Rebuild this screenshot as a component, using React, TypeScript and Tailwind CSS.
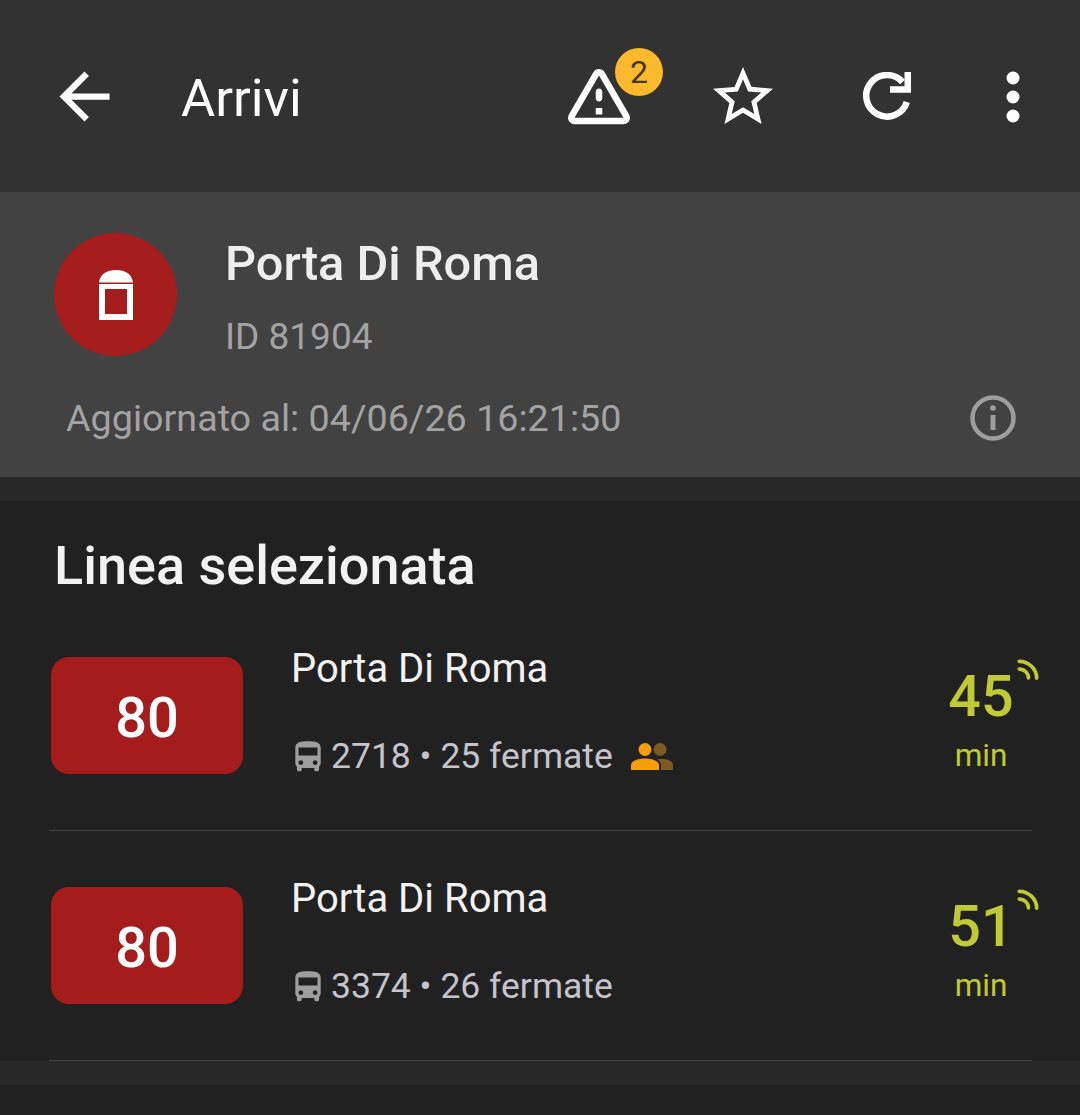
const BusIcon = () => (
  <svg viewBox="0 0 24 24" className="-ml-[2px] h-[38px] w-[38px] shrink-0 fill-[#9e9e9e]">
    <path d="M4 16c0 .88.39 1.67 1 2.22V20c0 .55.45 1 1 1h1c.55 0 1-.45 1-1v-1h8v1c0 .55.45 1 1 1h1c.55 0 1-.45 1-1v-1.78c.61-.55 1-1.34 1-2.22V6c0-3.5-3.58-4-8-4s-8 .5-8 4v10zm3.5 1c-.83 0-1.5-.67-1.5-1.5S6.67 14 7.5 14s1.5.67 1.5 1.5S8.33 17 7.5 17zm9 0c-.83 0-1.5-.67-1.5-1.5s.67-1.5 1.5-1.5 1.5.67 1.5 1.5-.67 1.5-1.5 1.5zm1.5-6H6V6h12v5z" />
  </svg>
);

const CrowdIcon = () => (
  <svg viewBox="0 0 44 30" className="ml-[17px] h-[30px] w-[44px] shrink-0">
    <circle cx="30" cy="7.5" r="6.5" fill="#7d5a22" />
    <path d="M27 17.5c7-1.5 16 .5 16 5.5v5H31v-5c0-2.3-1.5-4.3-4-5.5z" fill="#7d5a22" />
    <circle cx="15" cy="7.5" r="6.5" fill="#f59e0b" />
    <path d="M1 28v-5c0-4 7-6.5 14-6.5s14 2.5 14 6.5v5H1z" fill="#f59e0b" />
  </svg>
);

const RealtimeIcon = () => (
  <svg viewBox="0 0 24 24" fill="none" className="absolute right-[-25px] top-[-3px] h-[22px] w-[22px] stroke-[#c0ca33]" strokeWidth="4" strokeLinecap="round">
    <path d="M2.5 2.5C13 2.5 21.5 11 21.5 21" />
    <path d="M2.5 11C8 11 12.5 15.5 12.5 20.5" />
  </svg>
);

const ArrivalRow = ({ vehicle, stops, minutes, crowded }: { vehicle: string; stops: number; minutes: number; crowded?: boolean }) => (
  <div className="relative flex h-[230px] items-start pl-[51px]">
    <div className="mt-[56px] flex h-[117px] w-[192px] items-center justify-center rounded-[18px] bg-[#a51c1c] pt-[5px] text-[56px] font-medium text-white">
      80
    </div>
    <div className="ml-[48px] flex-1">
      <div className="mt-[43px] text-[40px] leading-[50px] text-[#f2f2f2]">Porta Di Roma</div>
      <div className="mt-[38px] flex h-[50px] items-center text-[35.5px] text-[#c5c3cc]">
        <BusIcon />
        <span className="ml-[4px] whitespace-nowrap">{vehicle} • {stops} fermate</span>
        {crowded && <CrowdIcon />}
      </div>
    </div>
    <div className="mr-[40px] mt-[61px] flex w-[118px] flex-col items-center text-[#c0ca33]">
      <div className="relative text-[57.5px] font-medium leading-[70px]">
        {minutes}
        <RealtimeIcon />
      </div>
      <div className="mt-[4px] text-[31.5px] leading-[40px]">min</div>
    </div>
    <div className="absolute bottom-0 left-[49px] right-[48px] h-px bg-[#424242]" />
  </div>
);

export default function App() {
  return (
    <div className="h-[1115px] w-[1080px] overflow-hidden bg-[#212121] font-['Roboto',sans-serif]">
      {/* app bar */}
      <div className="flex h-[192px] items-center bg-[#323232] pb-[2px] text-white">
        <svg viewBox="0 0 24 24" className="ml-[47px] mt-[2px] h-[75px] w-[75px] fill-white">
          <path d="M20 11H7.83l5.59-5.59L12 4l-8 8 8 8 1.41-1.41L7.83 13H20v-2z" />
        </svg>
        <h1 className="ml-[59px] mt-[6px] flex-1 text-[52.5px] font-normal leading-none">Arrivi</h1>
        <div className="relative h-[78px] w-[78px]">
          <svg viewBox="0 0 24 24" className="h-[78px] w-[78px] fill-white">
            <path d="M12 5.99L19.53 19H4.47L12 5.99M2.74 18c-.77 1.33.19 3 1.73 3h15.06c1.54 0 2.5-1.67 1.73-3L13.73 4.99c-.77-1.33-2.69-1.33-3.46 0L2.74 18zM11 11v2c0 .55.45 1 1 1s1-.45 1-1v-2c0-.55-.45-1-1-1s-1 .45-1 1zm0 5h2v2h-2z" />
          </svg>
          <span className="absolute left-[55px] top-[-8px] flex h-[48px] w-[48px] items-center justify-center rounded-full bg-[#fbb92e] text-[32px] text-[#4a3510]">
            2
          </span>
        </div>
        <svg viewBox="0 0 24 24" className="ml-[69px] mt-[4px] h-[72px] w-[72px] fill-white">
          <path d="M22 9.24l-7.19-.62L12 2 9.19 8.63 2 9.24l5.46 4.73L5.82 21 12 17.27 18.18 21l-1.63-7.03L22 9.24zM12 15.4l-3.76 2.27 1-4.28-3.32-2.88 4.38-.38L12 6.1l1.71 4.04 4.38.38-3.32 2.88 1 4.28L12 15.4z" />
        </svg>
        <svg viewBox="0 0 56 56" fill="none" className="ml-[79px] mt-[10px] h-[56px] w-[56px] stroke-white" strokeWidth="6.5">
          <path d="M44.5 10A20.75 20.75 0 1 0 48.8 30" />
          <path d="M32 17.5h17.75V0" />
        </svg>
        <svg viewBox="0 0 14 52" className="ml-[92px] mr-[60px] mt-[4px] h-[52px] w-[14px] fill-white">
          <circle cx="7" cy="7" r="6.5" />
          <circle cx="7" cy="26" r="6.5" />
          <circle cx="7" cy="45" r="6.5" />
        </svg>
      </div>

      {/* stop header */}
      <div className="h-[285px] bg-[#424242]">
        <div className="flex pl-[54px] pt-[41px]">
          <div className="flex h-[123px] w-[123px] items-center justify-center rounded-full bg-[#a51c1c]">
            <svg viewBox="0 0 34 50" className="h-[50px] w-[34px] fill-white">
              <path d="M0 12.5C1 4 8 0 17 0s16 4 17 12.5z" />
              <path fillRule="evenodd" d="M0 14h34v36H0zM6 19v25h22V19z" />
            </svg>
          </div>
          <div className="ml-[48px]">
            <div className="mt-[1px] text-[48.75px] font-medium leading-[60px] text-[#eeeeee]">Porta Di Roma</div>
            <div className="mt-[22px] text-[37px] leading-[42px] text-[#a3a3a3]">ID 81904</div>
          </div>
        </div>
        <div className="mt-[37px] flex items-center pl-[66px] pr-[64px]">
          <span className="flex-1 text-[37.7px] leading-[46px] text-[#a3a3a3]">Aggiornato al: 04/06/26 16:21:50</span>
          <svg viewBox="0 0 46 46" className="h-[46px] w-[46px] fill-none stroke-[#9e9e9e]">
            <circle cx="23" cy="23" r="20.5" strokeWidth="4.5" />
            <path d="M23 20v15" strokeWidth="5" />
            <circle cx="23" cy="13" r="2.8" className="fill-[#9e9e9e] stroke-none" />
          </svg>
        </div>
      </div>

      <div className="h-[24px] bg-[#292929]" />

      {/* selected line */}
      <div className="h-[100px] pl-[54px] pt-[37px] text-[54px] font-medium leading-[56px] text-[#f2f2f2]">Linea selezionata</div>
      <ArrivalRow vehicle="2718" stops={25} minutes={45} crowded />
      <ArrivalRow vehicle="3374" stops={26} minutes={51} />
      <div className="h-[24px] bg-[#292929]" />
    </div>
  );
}
